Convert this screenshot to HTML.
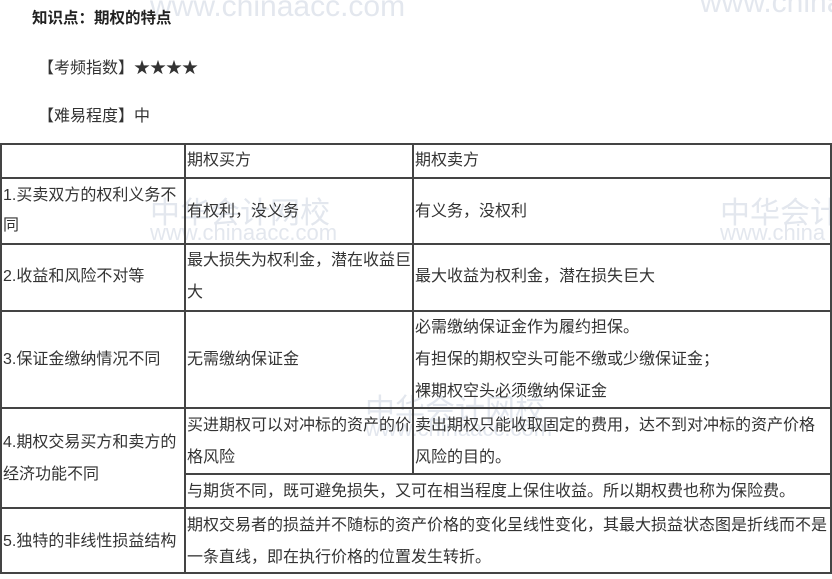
<!DOCTYPE html>
<html><head><meta charset="utf-8"><style>
html,body{margin:0;padding:0;background:#fff;width:832px;height:579px;overflow:hidden;position:relative;font-family:"Liberation Sans","Noto Sans CJK SC",sans-serif;color:#333;font-size:16px}
.t{position:absolute;white-space:nowrap}
.h{position:absolute;height:2px;background:#444}
.v{position:absolute;width:2px;background:#444}
.wm{position:absolute;color:#e3e7ee;font-size:30px;white-space:nowrap}
.c{position:absolute;line-height:32px;white-space:nowrap}
</style></head><body>
<div class="wm" style="left:150px;top:-10px">www.chinaacc.com</div>
<div class="wm" style="left:700px;top:-14px">www.china</div>
<div class="wm" style="left:150px;top:188px">中华会计网校</div>
<div class="wm" style="left:150px;top:220px;font-size:22px">www.chinaacc.com</div>
<div class="wm" style="left:720px;top:188px">中华会计</div>
<div class="wm" style="left:720px;top:220px;font-size:22px">www.china</div>
<div class="wm" style="left:365px;top:385px">中华会计网校</div>
<div class="wm" style="left:365px;top:416px;font-size:22px">www.chinaacc.com</div>
<div class="t" style="left:32px;top:6px;font-weight:bold;color:#222;font-size:15.5px">知识点：期权的特点</div>
<div class="t" style="left:38px;top:54px">【考频指数】★★★★</div>
<div class="t" style="left:38px;top:102px">【难易程度】中</div>
<div class="h" style="left:0;top:143px;width:832px"></div>
<div class="h" style="left:0;top:177px;width:832px"></div>
<div class="h" style="left:0;top:243px;width:832px"></div>
<div class="h" style="left:0;top:310px;width:832px"></div>
<div class="h" style="left:0;top:407px;width:832px"></div>
<div class="h" style="left:185px;top:473px;width:647px"></div>
<div class="h" style="left:0;top:507px;width:832px"></div>
<div class="h" style="left:0;top:572px;width:832px"></div>
<div class="v" style="left:0;top:143px;height:431px"></div>
<div class="v" style="left:184px;top:143px;height:431px"></div>
<div class="v" style="left:412px;top:143px;height:332px"></div>
<div class="v" style="left:830px;top:143px;height:431px"></div>
<div class="c" style="left:187px;top:145px">期权买方</div>
<div class="c" style="left:415px;top:145px">期权卖方</div>
<div class="c" style="left:3px;top:181px;line-height:30px">1.买卖双方的权利义务不<br>同</div>
<div class="c" style="left:187px;top:196px">有权利，没义务</div>
<div class="c" style="left:415px;top:196px">有义务，没权利</div>
<div class="c" style="left:3px;top:261px">2.收益和风险不对等</div>
<div class="c" style="left:187px;top:245px">最大损失为权利金，潜在收益巨<br>大</div>
<div class="c" style="left:415px;top:261px">最大收益为权利金，潜在损失巨大</div>
<div class="c" style="left:3px;top:344px">3.保证金缴纳情况不同</div>
<div class="c" style="left:187px;top:344px">无需缴纳保证金</div>
<div class="c" style="left:415px;top:312px">必需缴纳保证金作为履约担保。<br>有担保的期权空头可能不缴或少缴保证金；<br>裸期权空头必须缴纳保证金</div>
<div class="c" style="left:3px;top:427px">4.期权交易买方和卖方的<br>经济功能不同</div>
<div class="c" style="left:187px;top:410px">买进期权可以对冲标的资产的价<br>格风险</div>
<div class="c" style="left:415px;top:410px">卖出期权只能收取固定的费用，达不到对冲标的资产价格<br>风险的目的。</div>
<div class="c" style="left:187px;top:476px">与期货不同，既可避免损失，又可在相当程度上保住收益。所以期权费也称为保险费。</div>
<div class="c" style="left:3px;top:526px">5.独特的非线性损益结构</div>
<div class="c" style="left:187px;top:510px">期权交易者的损益并不随标的资产价格的变化呈线性变化，其最大损益状态图是折线而不是<br>一条直线，即在执行价格的位置发生转折。</div>
</body></html>
